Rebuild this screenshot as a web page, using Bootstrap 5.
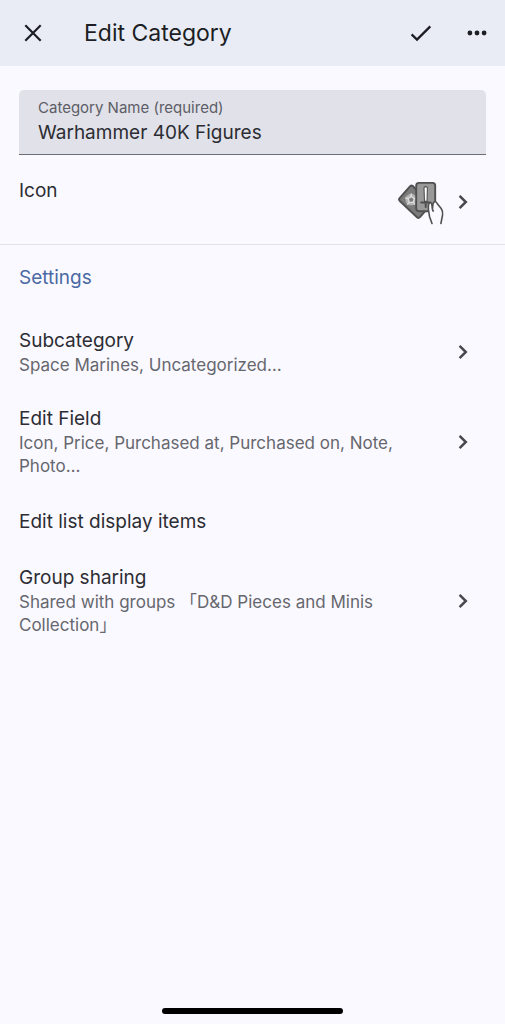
<!DOCTYPE html>
<html lang="en">
<head>
<meta charset="utf-8">
<meta name="viewport" content="width=device-width, initial-scale=1">
<title>Edit Category</title>
<link href="https://cdn.jsdelivr.net/npm/bootstrap@5.3.0/dist/css/bootstrap.min.css" rel="stylesheet">
<style>
  body { background: #faf9ff; color: #2c2d33; font-family: Inter, "Noto Sans CJK JP", sans-serif; font-size: 19px; line-height: 27px; }
  svg { display: block; flex: none; fill: none; }
  .app-bar { background: #e9ecf5; height: 66px; padding: 0 16px 0 20px; color: #1c1e24; }
  .app-bar h1 { font-size: 23px; line-height: 32px; margin-left: 38px; }
  .icon-btn { color: inherit; line-height: 1; }
  .name-field { background: #e1e1e9; border-bottom: 1px solid #6c6d75; border-radius: 5px 5px 0 0; margin: 24px 19px 8px; padding: 6px 19px 8px; }
  .name-field label { font-size: 15px; line-height: 23px; color: #5c5d66; }
  .name-field input { font-size: 19px; line-height: 27px; color: inherit; }
  .setting-row { min-height: 58px; padding: 14px 30px 14px 19px; gap: 32px; background: none; color: inherit; }
  .setting-row.with-art { min-height: 78px; gap: 6px; }
  .setting-row .detail { font-size: 17px; line-height: 23px; color: #66676e; }
  .setting-row .chevron { color: #48494f; }
  .divider { border-top: 1px solid #e2e2e9; margin-top: 3px; }
  .section-title { font-size: 19px; line-height: 27px; color: #4a69a3; padding: 19px 19px 22px; }
  .home-bar { width: 36%; height: 6px; border-radius: 3px; background: #000; margin-bottom: 10px; }
</style>
</head>
<body class="d-flex flex-column min-vh-100">
<header class="app-bar d-flex align-items-center">
  <button type="button" class="btn icon-btn p-0 border-0" aria-label="Close">
    <svg width="26" height="26" viewBox="0 0 26 26" stroke="currentColor" stroke-width="2.2"><path d="M5.3 5.3 20.7 20.7M20.7 5.3 5.3 20.7"/></svg>
  </button>
  <h1 class="mb-0 fw-normal flex-grow-1">Edit Category</h1>
  <button type="button" class="btn icon-btn p-0 border-0 me-4" aria-label="Save">
    <svg width="24" height="24" viewBox="0 0 24 24" stroke="currentColor" stroke-width="2.3"><path d="M2.6 13.4 8 18.6 21.3 5.4"/></svg>
  </button>
  <button type="button" class="btn icon-btn p-0 border-0 ms-2" aria-label="More options">
    <svg width="24" height="24" viewBox="0 0 24 24"><g fill="currentColor"><circle cx="4.9" cy="12" r="2.4"/><circle cx="12" cy="12" r="2.4"/><circle cx="19.1" cy="12" r="2.4"/></g></svg>
  </button>
</header>

<main>
  <div class="name-field">
    <label for="categoryName" class="d-block">Category Name (required)</label>
    <input id="categoryName" type="text" class="form-control-plaintext p-0 border-0" value="Warhammer 40K Figures" required>
  </div>

  <a href="#icon" class="setting-row with-art d-flex align-items-center text-decoration-none">
    <span class="flex-grow-1 align-self-start">Icon</span>
    <svg width="48" height="48" viewBox="0 0 48 48" stroke="#505050" stroke-width="1.9" stroke-linejoin="round" stroke-linecap="round" aria-hidden="true">
      <path fill="#7b7b7b" d="M13.2 8.2 2.6 20.2Q1.4 21.7 2.8 23L20 39.3Q21.5 40.6 22.9 39.2L33.6 27.2 15.8 8Q14.4 7 13.2 8.2Z"/>
      <circle cx="14.2" cy="21.6" r="5.8" fill="#b4b4b4" stroke="none"/>
      <path fill="#7b7b7b" stroke="#dedede" stroke-width="1.3" d="m14.2 18.5 3.1 2.2-1.2 3.6h-3.8l-1.2-3.6zM14.2 15.8v2.7M19.9 19.9l-2.6.8M17.7 26.2l-1.6-1.9M10.7 26.2l1.6-1.9M8.6 19.9l2.5.8"/>
      <rect x="19.2" y="4.9" width="19" height="28.3" rx="2.6" fill="#999"/>
      <path fill="#fff" stroke-width="1.1" d="M27 9.8Q28.7 7.4 30.4 9.8L30 23.4H27.5Z"/>
      <path stroke-width="2" d="M24.2 24.4H33.4M28.7 24.3V29"/>
      <path fill="#faf9ff" stroke="none" d="m35 45.5-2.4-6.8c-1-5.1-2-10.3-.8-12.9.9-1.8 2.8-1.2 3.1 1.1l.5 4.2c.3-2.7.4-5.6 1.3-6.8 1.2-1.3 3.1-.3 3.6 1.5l3.9 4.7q1.9 2.9 1.4 6.4l-1.7 8.6Z"/>
      <path stroke-width="1.6" d="m35 45.5-2.4-6.8c-1-5.1-2-10.3-.8-12.9.9-1.8 2.8-1.2 3.1 1.1l.5 4.2c.3-2.7.4-5.6 1.3-6.8 1.2-1.3 3.1-.3 3.6 1.5l3.9 4.7q1.9 2.9 1.4 6.4l-1.7 8.6M35.4 31.1l.8 2"/>
    </svg>
    <svg class="chevron" width="24" height="24" viewBox="0 0 24 24" stroke="currentColor" stroke-width="2.5"><path d="m8.6 5.9 6.2 6.1-6.2 6.1"/></svg>
  </a>
  <div class="divider"></div>

  <h2 class="section-title fw-normal mb-0">Settings</h2>

  <nav aria-label="Category settings">
    <a href="#subcategory" class="setting-row d-flex align-items-center text-decoration-none">
      <span class="flex-grow-1"><span class="d-block">Subcategory</span><span class="detail d-block">Space Marines, Uncategorized…</span></span>
      <svg class="chevron" width="24" height="24" viewBox="0 0 24 24" stroke="currentColor" stroke-width="2.5"><path d="m8.6 5.9 6.2 6.1-6.2 6.1"/></svg>
    </a>
    <a href="#fields" class="setting-row d-flex align-items-center text-decoration-none">
      <span class="flex-grow-1"><span class="d-block">Edit Field</span><span class="detail d-block">Icon, Price, Purchased at, Purchased on, Note, Photo…</span></span>
      <svg class="chevron" width="24" height="24" viewBox="0 0 24 24" stroke="currentColor" stroke-width="2.5"><path d="m8.6 5.9 6.2 6.1-6.2 6.1"/></svg>
    </a>
    <a href="#display" class="setting-row d-flex align-items-center text-decoration-none">
      <span>Edit list display items</span>
    </a>
    <a href="#sharing" class="setting-row d-flex align-items-center text-decoration-none">
      <span class="flex-grow-1"><span class="d-block">Group sharing</span><span class="detail d-block">Shared with groups 「D&amp;D Pieces and Minis Collection」</span></span>
      <svg class="chevron" width="24" height="24" viewBox="0 0 24 24" stroke="currentColor" stroke-width="2.5"><path d="m8.6 5.9 6.2 6.1-6.2 6.1"/></svg>
    </a>
  </nav>
</main>

<div class="home-bar mt-auto mx-auto" aria-hidden="true"></div>
<script src="https://cdn.jsdelivr.net/npm/bootstrap@5.3.0/dist/js/bootstrap.bundle.min.js"></script>
</body>
</html>
